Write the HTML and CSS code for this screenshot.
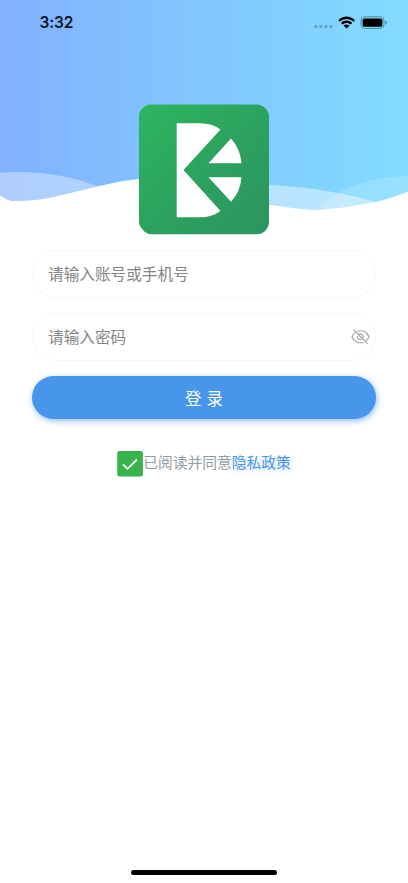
FILE: index.html
```html
<!DOCTYPE html>
<html lang="zh-CN">
<head>
<meta charset="utf-8">
<meta name="viewport" content="width=device-width">
<title>登录</title>
<link rel="stylesheet" href="styles.css">
</head>
<body>
<main class="screen">
  <svg class="waves" viewBox="0 0 408 235" aria-hidden="true">
    <g fill="#fff">
      <path opacity=".36" d="M0 172.6C35 170 70 175 99 187L110 235H0Z"/>
      <path opacity=".43" d="M240 184.3C290 184 335 190 376 202L376 235H240Z"/>
      <path opacity=".18" d="M316 210C333 191 365 177 408 176V235H316Z"/>
      <path d="M0 195.7C4 197 6 200.4 13 200.9C52 203 91 184 139 179C185 174 225 202 269 205C284 206 300 210 317 210C344 208 383 203 408 191.5V235H0Z"/>
    </g>
  </svg>
  <header class="status">
    <span class="time">3:32</span>
    <svg class="indicators" width="76" height="20" viewBox="0 0 76 20" aria-hidden="true">
      <g fill="#5ea6c5"><circle cx="3.8" cy="13.5" r="1.75"/><circle cx="8.8" cy="13.5" r="1.75"/><circle cx="13.8" cy="13.5" r="1.75"/><circle cx="18.8" cy="13.5" r="1.75"/></g>
      <path d="M26.3 7.2C31 2.3 38.2 2.3 42.9 7.2L41.4 8.8C37.6 5 31.6 5 27.8 8.8ZM29 10C32.2 6.8 37 6.8 40.2 10L38.7 11.6C36.3 9.3 32.9 9.3 30.5 11.6ZM31.7 12.7Q34.6 10.4 37.5 12.7L34.6 15.5Z"/>
      <rect x="49" y="3.8" width="23" height="11.6" rx="3.6" fill="none" stroke="#4e8ba2"/>
      <rect x="50.6" y="5.4" width="19.8" height="8.4" rx="1.9"/>
      <path d="M73.2 7.7Q75 8.2 75 9.6T73.2 11.5Z" fill="#4e8ba2"/>
    </svg>
  </header>
  <svg class="logo" viewBox="0 0 130 130" role="img">
    <defs><linearGradient id="green" x2="1" y2="1"><stop offset="0" stop-color="#2cb75e"/><stop offset=".5" stop-color="#2ca25f"/><stop offset="1" stop-color="#2c9560"/></linearGradient></defs>
    <path d="M12 .5H118Q124 1 127 5Q130 8 130 12V119Q129 125 125 128Q122 130.3 118 130.3H12Q7 130 4 126Q0 122 0 118V12Q0 7 4 4Q7 .5 12 .5Z" fill="url(#green)"/>
    <g fill="#fff">
      <path d="M37.7 19.2H61Q73 19.2 81.5 25.5L44.5 66L81.5 107Q73 113.3 61 113.3H37.7Z"/>
      <path d="M92 34.5Q101.5 45 102.5 59.3H69.5Z"/>
      <path d="M69.5 73.2H102.5Q101.5 87.5 92 97.7Z"/>
    </g>
  </svg>
  <form class="login">
    <div class="field"><input type="text" placeholder="请输入账号或手机号"></div>
    <div class="field">
      <input type="password" placeholder="请输入密码">
      <svg class="eye" width="19" height="16" viewBox="0 0 19 16" fill="none" stroke="#a3a3a3" stroke-width="1.15" aria-hidden="true">
        <path d="M6.1 2.5Q11 .7 14.5 3.3Q17 5.1 18 7.8Q17 10.3 15.1 11.8M12.7 13.3Q7.9 15 4.3 12.1Q1.9 10.4 1 7.7Q2.1 5 4.2 3.4M7.6 5.5Q9.6 4.1 11.5 5.9Q12.8 7.3 11.9 9M10.5 10.4Q8.4 11 7 9.4Q6.1 8.3 6.6 6.9M9 7.1L10.3 8.5M2.8 1L16.7 14.7"/>
      </svg>
    </div>
    <button class="submit" type="button">登 录</button>
    <div class="agreement">
      <svg class="check" width="26" height="26" viewBox="0 0 26 26" aria-hidden="true"><rect x=".2" width="25.7" height="25.4" rx="2.5" fill="#37b44b"/><path d="M6 13.4L10.5 17.8L20 8.5" fill="none" stroke="#fff" stroke-width="1.8"/></svg>
      <span class="terms">已阅读并同意<a class="policy">隐私政策</a></span>
    </div>
  </form>
  <div class="home"></div>
</main>
</body>
</html>
```
FILE: styles.css
```css
* { box-sizing: border-box; }
body { margin: 0; background: #fff; font-family: "Liberation Sans", "Noto Sans CJK SC", sans-serif; }
.screen {
  position: relative;
  display: flex;
  flex-direction: column;
  align-items: center;
  height: 883px;
  overflow: hidden;
  background: linear-gradient(90deg, #82b1ff, #82dcff) top / 100% 230px no-repeat;
}
.waves { position: absolute; top: 0; left: 0; width: 408px; height: 235px; }
.status {
  position: relative;
  display: flex;
  justify-content: space-between;
  width: 100%;
  height: 104px;
  padding: 13px 21px 0 39.6px;
}
.indicators { margin-right: -1px; }
.time { font: 600 15.5px/20px Inter, sans-serif; letter-spacing: -.15px; color: #071521; }
.logo { position: relative; width: 130px; height: 130px; flex: none; overflow: visible; }
.login { width: 344px; padding-top: 16px; }
.field {
  display: flex;
  align-items: center;
  height: 47.5px;
  margin-bottom: 15.7px;
  padding: 0 5px 0 15px;
  border: 1px solid #f7f7f7;
  border-radius: 24px;
}
.field input {
  flex: 1;
  min-width: 0;
  padding: 0;
  border: 0;
  outline: 0;
  background: none;
  font: 400 15.65px/24px "Noto Sans CJK SC", sans-serif;
}
.field input::placeholder { color: #858585; opacity: 1; }
.submit {
  display: block;
  width: 100%;
  height: 43px;
  padding: 1px 0 0;
  border: 0;
  border-radius: 22px;
  background: #4796ec;
  box-shadow: 1px 2px 6px rgba(71, 150, 236, .6);
  color: #fff;
  font: 400 16.5px/42px "Noto Sans CJK SC", sans-serif;
  word-spacing: 1.5px;
}
.agreement {
  display: flex;
  justify-content: center;
  align-items: center;
  margin-top: 31.5px;
  font: 400 14.75px/24px "Noto Sans CJK SC", sans-serif;
  color: #929ca5;
}
.terms { margin-top: -4px; }
.policy { color: #4796ec; text-shadow: 1px 2px 5px rgba(71, 150, 236, .3); }
.home { width: 146px; height: 5px; margin: auto 0 8px; border-radius: 3px; background: #000; }
```
